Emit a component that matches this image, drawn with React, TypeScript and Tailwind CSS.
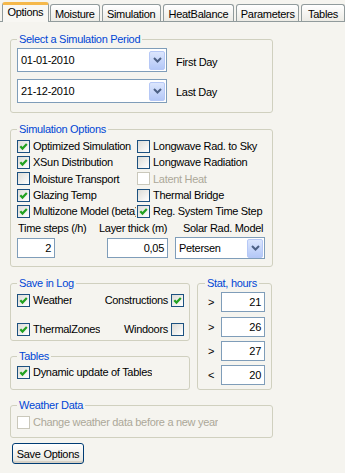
import React from 'react'

const tabs = [
  { label: 'Moisture', cls: 'ml-px w-[50px]' },
  { label: 'Simulation', cls: 'ml-[2px] w-[59px]' },
  { label: 'HeatBalance', cls: 'ml-[2px] w-[72px]' },
  { label: 'Parameters', cls: 'ml-[2px] w-[63px]' },
  { label: 'Tables', cls: 'ml-[2px] w-[44px]' },
]

function Check ({ checked, disabled }: { checked?: boolean, disabled?: boolean }): JSX.Element {
  return (
    <span
      className={`flex h-[13px] w-[13px] shrink-0 items-center justify-center border ${
        disabled ? 'border-[#cac8bb] bg-white' : 'border-[#1c5180] bg-linear-to-br from-[#dcdcd7] to-white'
      }`}
    >
      {checked && (
        <svg width="11" height="11" viewBox="0 0 11 11">
          <path d="M2.3 5.2 L4.5 7.6 L8.8 3.1" fill="none" stroke="#21a121" strokeWidth="2.2" />
        </svg>
      )}
    </span>
  )
}

function DropButton (): JSX.Element {
  return (
    <span className="mr-px flex h-[19px] w-[16px] shrink-0 items-center justify-center rounded-[2px] border border-[#b6c8f6] bg-linear-to-b from-[#dce6fd] to-[#b4c8f7]">
      <svg width="9" height="6" viewBox="0 0 9 6">
        <path d="M1 1 L4.5 4.5 L8 1" fill="none" stroke="#4d6185" strokeWidth="2" />
      </svg>
    </span>
  )
}

function Option ({ label, checked, disabled, wide }: { label: string, checked?: boolean, disabled?: boolean, wide?: boolean }): JSX.Element {
  return (
    <div className={`flex items-center overflow-hidden ${wide ? '' : 'w-[119px]'}`}>
      <Check checked={checked} disabled={disabled} />
      <span className={`ml-[3px] whitespace-nowrap ${disabled ? 'text-[#aca899]' : ''}`}>{label}</span>
    </div>
  )
}

const optionRows = [
  { h: 'h-[16px]', a: ['Optimized Simulation', true], b: ['Longwave Rad. to Sky', false] },
  { h: 'h-[16px]', a: ['XSun Distribution', true], b: ['Longwave Radiation', false] },
  { h: 'h-[17px]', a: ['Moisture Transport', false], b: ['Latent Heat', false, true] },
  { h: 'h-[16px]', a: ['Glazing Temp', true], b: ['Thermal Bridge', false] },
  { h: 'h-[16px]', a: ['Multizone Model (beta)', true], b: ['Reg. System Time Step', true] },
] as const

const stats = [
  { sign: '>', value: '21', cls: 'mt-[2px]' },
  { sign: '>', value: '26', cls: 'mt-[5px]' },
  { sign: '>', value: '27', cls: 'mt-[4px]' },
  { sign: '<', value: '20', cls: 'mt-[4px]' },
]

export default function App (): JSX.Element {
  return (
    <div className="h-[473px] w-[345px] overflow-hidden bg-[#f5f4ef] font-['Liberation_Sans',Arial,sans-serif] text-[11px] leading-[14px] tracking-[-0.3px] text-black">
      {/* tab strip */}
      <div className="flex h-[22px] items-end border-b border-[#919b9c] pl-[2px]">
        <div className="relative z-10 -mb-px h-[20px] w-[47px] rounded-t-[3px] border-x border-t-[3px] border-x-[#919b9c] border-t-[#f5b84a] bg-[#f8f7f3] text-center">
          Options
        </div>
        {tabs.map(t => (
          <div
            key={t.label}
            className={`h-[17px] rounded-t-[3px] border-x border-t border-[#919b9c] bg-linear-to-b from-white to-[#ecebe5] pt-[2px] text-center ${t.cls}`}
          >
            {t.label}
          </div>
        ))}
      </div>

      <div className="flex flex-col pl-[10px]">
        {/* Select a Simulation Period */}
        <fieldset className="mt-[10px] w-[263px] rounded-[3px] border border-[#d0d0bf] px-[6px] pb-[9px]">
          <legend className="px-[2px] text-[#0046d5]">Select a Simulation Period</legend>
          <div className="mt-[2px] flex items-start">
            <div className="flex h-[24px] w-[150px] items-center border border-[#7f9db9] bg-white">
              <span className="flex-1 pl-[3px]">01-01-2010</span>
              <DropButton />
            </div>
            <span className="ml-[9px] mt-[7px]">First Day</span>
          </div>
          <div className="mt-[7px] flex items-start">
            <div className="flex h-[24px] w-[150px] items-center border border-[#7f9db9] bg-white">
              <span className="flex-1 pl-[3px]">21-12-2010</span>
              <DropButton />
            </div>
            <span className="ml-[9px] mt-[6px]">Last Day</span>
          </div>
        </fieldset>

        {/* Simulation Options */}
        <fieldset className="mt-[9px] w-[263px] rounded-[3px] border border-[#d0d0bf] px-[6px] pb-[7px]">
          <legend className="px-[2px] text-[#0046d5]">Simulation Options</legend>
          <div className="mt-[2px] flex flex-col">
            {optionRows.map(r => (
              <div key={r.a[0]} className={`grid grid-cols-[120px_1fr] items-center ${r.h}`}>
                <Option label={r.a[0]} checked={r.a[1]} />
                <Option label={r.b[0]} checked={r.b[1]} disabled={r.b.length > 2} wide />
              </div>
            ))}
          </div>
          <div className="mt-[2px] flex whitespace-nowrap">
            <span className="ml-px w-[81px]">Time steps (/h)</span>
            <span className="w-[84px]">Layer thick (m)</span>
            <span>Solar Rad. Model</span>
          </div>
          <div className="mt-[2px] flex items-center">
            <div className="flex h-[20px] w-[38px] items-center justify-end border border-[#7f9db9] bg-white pr-[3px]">2</div>
            <div className="ml-[52px] flex h-[20px] w-[61px] items-center justify-end border border-[#7f9db9] bg-white pr-[3px]">0,05</div>
            <div className="ml-[7px] flex h-[22px] w-[90px] items-center border border-[#7f9db9] bg-white">
              <span className="flex-1 pl-[3px]">Petersen</span>
              <DropButton />
            </div>
          </div>
        </fieldset>

        <div className="mt-[9px] flex items-start">
          <div className="flex w-[180px] flex-col">
            {/* Save in Log */}
            <fieldset className="rounded-[3px] border border-[#d0d0bf] pb-[3px] pl-[6px] pr-[5px]">
              <legend className="px-[2px] text-[#0046d5]">Save in Log</legend>
              <div className="mt-[2px] flex h-[16px] items-center justify-between">
                <Option label="Weather" checked wide />
                <div className="flex items-center">
                  <span className="mr-[3px]">Constructions</span>
                  <Check checked />
                </div>
              </div>
              <div className="mt-[13px] flex h-[16px] items-center justify-between">
                <Option label="ThermalZones" checked wide />
                <div className="flex items-center">
                  <span className="mr-[3px]">Windoors</span>
                  <Check />
                </div>
              </div>
            </fieldset>

            {/* Tables */}
            <fieldset className="mt-[8px] rounded-[3px] border border-[#d0d0bf] pb-[9px] pl-[6px] pr-[5px]">
              <legend className="px-[2px] text-[#0046d5]">Tables</legend>
              <div className="mt-px flex h-[16px] items-center">
                <Option label="Dynamic update of Tables" checked wide />
              </div>
            </fieldset>
          </div>

          {/* Stat, hours */}
          <fieldset className="ml-[7px] w-[75px] rounded-[3px] border border-[#d0d0bf] pb-[4px] pl-[7px]">
            <legend className="px-[2px] text-[#0046d5]">Stat, hours</legend>
            {stats.map((s, i) => (
              <div key={i} className={`flex items-center ${s.cls}`}>
                <span className="ml-[3px] w-[13px]">{s.sign}</span>
                <div className="flex h-[20px] w-[44px] items-center justify-end border border-[#7f9db9] bg-white pr-[3px]">{s.value}</div>
              </div>
            ))}
          </fieldset>
        </div>

        {/* Weather Data */}
        <fieldset className="mt-[8px] w-[263px] rounded-[3px] border border-[#d0d0bf] px-[6px] pb-[7px]">
          <legend className="px-[2px] text-[#0046d5]">Weather Data</legend>
          <div className="mt-[2px] flex h-[16px] items-center">
            <Option label="Change weather data before a new year" disabled wide />
          </div>
        </fieldset>

        <button className="ml-[2px] mt-[5px] h-[21px] w-[72px] rounded-[3px] border border-[#003c74] bg-linear-to-b from-white to-[#e6e5de] text-center leading-[14px] shadow-[inset_0_-2px_0_#d6d0c5]">
          Save Options
        </button>
      </div>
    </div>
  )
}
